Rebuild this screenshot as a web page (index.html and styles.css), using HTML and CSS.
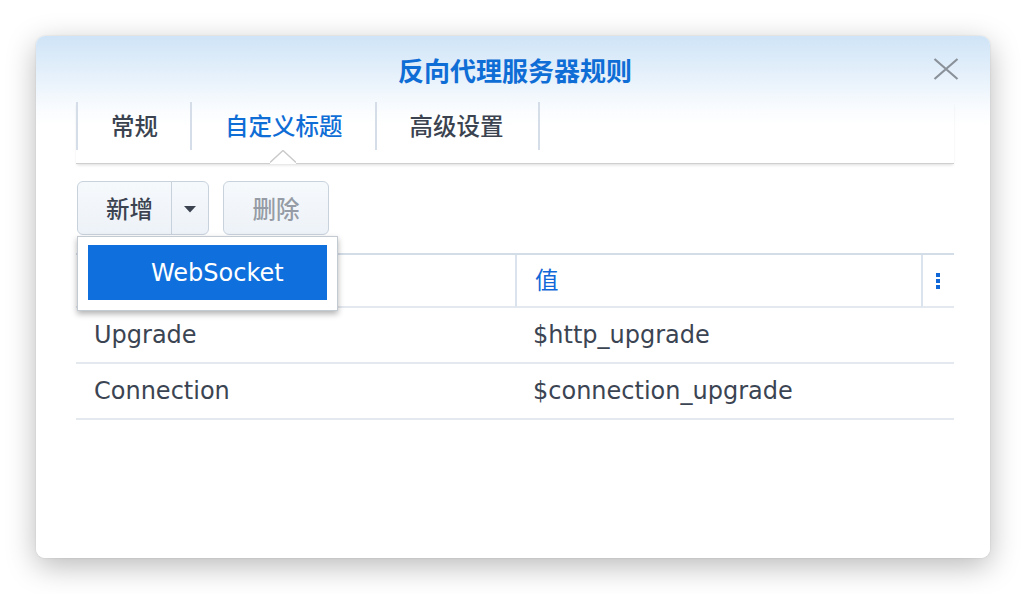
FILE: index.html
```html
<!DOCTYPE html>
<html lang="zh">
<head>
<meta charset="utf-8">
<title>反向代理服务器规则</title>
<link rel="stylesheet" href="styles.css">
</head>
<body>
<div class="dialog">
  <div class="titlebar">
    <span class="spacer"></span>
    <span class="title">反向代理服务器规则</span>
    <button class="close" aria-label="关闭">
      <svg width="26" height="22" viewBox="0 0 26 22"><path d="M1.5 1 L24.5 21 M24.5 1 L1.5 21" stroke="#8a9199" stroke-width="2.2" fill="none"/></svg>
    </button>
  </div>
  <div class="content">
    <div class="tabs">
      <div class="tab">常规</div>
      <div class="tab active">自定义标题
        <svg class="notch" width="26" height="14" viewBox="0 0 26 14"><polygon points="0,12.5 13,0.5 26,12.5 26,14 0,14" fill="#fff"/><polyline points="0,12.5 13,0.5 26,12.5" fill="none" stroke="#c9c9c9" stroke-width="1.4"/></svg>
      </div>
      <div class="tab">高级设置</div>
    </div>
    <div class="toolbar">
      <div class="split">
        <button class="btn-part main">新增</button>
        <button class="btn-part arrow" aria-label="更多"><svg width="12" height="7" viewBox="0 0 12 7"><polygon points="0,0 12,0 6,6.5" fill="#3b4350"/></svg></button>
        <div class="menu">
          <div class="menu-item">WebSocket</div>
        </div>
      </div>
      <button class="btn disabled">删除</button>
    </div>
    <div class="grid">
      <div class="cell head c1"></div>
      <div class="cell head c2">值</div>
      <div class="cell head c3"><span class="kebab"><i></i><i></i><i></i></span></div>
      <div class="cell c1">Upgrade</div>
      <div class="cell c2">$http_upgrade</div>
      <div class="cell c3"></div>
      <div class="cell c1">Connection</div>
      <div class="cell c2">$connection_upgrade</div>
      <div class="cell c3"></div>
    </div>
  </div>
</div>
</body>
</html>
```
FILE: styles.css
```css
* { box-sizing: border-box; }
html, body { margin: 0; padding: 0; background: #ffffff; }
body {
  width: 1026px;
  height: 594px;
  overflow: hidden;
  padding: 36px 0 0 36px;
  font-family: "DejaVu Sans", "Noto Sans CJK SC", sans-serif;
  color: #3b4452;
}
.dialog {
  width: 954px;
  height: 522px;
  border-radius: 9px;
  background: linear-gradient(to bottom, #cfe4f7 0px, #e6f1fb 40px, #f8fbfe 70px, #ffffff 90px);
  box-shadow: 0 8px 30px rgba(0, 0, 0, 0.28), 0 0 2px rgba(0, 0, 0, 0.12);
}
.titlebar {
  height: 66px;
  display: grid;
  grid-template-columns: 1fr auto 1fr;
  align-items: center;
}
.title {
  font-family: "Noto Sans CJK SC", sans-serif;
  font-size: 26px;
  font-weight: bold;
  color: #0f6dd6;
  padding-left: 4px;
}
.close {
  justify-self: end;
  margin-right: 31px;
  margin-top: -1px;
  border: 0;
  padding: 0;
  background: none;
  display: flex;
}
.content {
  padding: 0 36px 0 40px;
}
.tabs {
  display: flex;
  height: 62px;
  border-bottom: 1px solid #cfcfcf;
  box-shadow: 0 2px 3px -1px rgba(0, 0, 0, 0.14);
  position: relative;
}
.tab {
  position: relative;
  height: 48px;
  padding: 0 32px 2px 33px;
  border-left: 2px solid #d5dee8;
  display: flex;
  align-items: center;
  font-family: "Noto Sans CJK SC", sans-serif;
  font-size: 23.5px;
  font-weight: 500;
  color: #3b4350;
}
.tab:last-child { border-right: 2px solid #d5dee8; padding-right: 34px; }
.tab.active { color: #0f6dd6; }
.notch {
  position: absolute;
  left: 50%;
  top: 48px;
  margin-left: -13px;
  display: block;
}
.toolbar {
  display: flex;
  gap: 14px;
  margin-top: 17px;
  padding-left: 1px;
}
.split {
  position: relative;
  display: flex;
  height: 54px;
  border: 1.5px solid #c8d2dd;
  border-radius: 6px;
  background: linear-gradient(#f6f9fc, #edf2f8);
}
.btn-part {
  border: 0;
  background: none;
  font-family: "Noto Sans CJK SC", sans-serif;
  font-size: 23.5px;
  font-weight: 500;
  color: #3b4350;
  padding: 0;
  display: flex;
  align-items: center;
  justify-content: center;
}
.btn-part.main { width: 94px; padding-left: 10px; border-right: 1.5px solid #c8d2dd; }
.btn-part.arrow { width: 36px; padding-top: 2px; }
.btn {
  width: 106px;
  height: 54px;
  border: 1.5px solid #c8d2dd;
  border-radius: 6px;
  background: linear-gradient(#f6f9fc, #edf2f8);
  font-family: "Noto Sans CJK SC", sans-serif;
  font-size: 23.5px;
  font-weight: 500;
  padding: 0;
}
.btn.disabled { color: #959ca5; }
.menu {
  position: absolute;
  left: -1px;
  top: 54px;
  width: 261px;
  height: 75px;
  background: #fff;
  border: 1px solid #c3cad2;
  box-shadow: 0 3px 6px rgba(0, 0, 0, 0.3);
  padding: 8px 10px 9px 10px;
  z-index: 5;
}
.menu-item {
  height: 55px;
  background: #0e6fdd;
  color: #ffffff;
  font-size: 24px;
  display: flex;
  align-items: center;
  padding-left: 63px;
}
.grid {
  margin-top: 18px;
  display: grid;
  grid-template-columns: 439px 406px 1fr;
  border-top: 2px solid #d3dde8;
}
.cell {
  height: 56px;
  border-bottom: 2px solid #e4e9ef;
  display: flex;
  align-items: center;
  padding-left: 18px;
  font-size: 24px;
  color: #3b4452;
  white-space: nowrap;
}
.cell.head {
  height: 53px;
  padding-bottom: 4px;
}
.cell.head.c2, .cell.head.c3 { border-left: 2px solid #dbe4ee; }
.cell.head.c2 {
  font-family: "Noto Sans CJK SC", sans-serif;
  color: #1068d8;
  font-size: 23.5px;
}
.cell.head.c3 { padding-bottom: 0; }
.cell.c3 { padding-left: 13px; }
.kebab {
  display: flex;
  flex-direction: column;
  gap: 2px;
}
.kebab i {
  display: block;
  width: 4px;
  height: 4px;
  background: #1068d8;
}
```
